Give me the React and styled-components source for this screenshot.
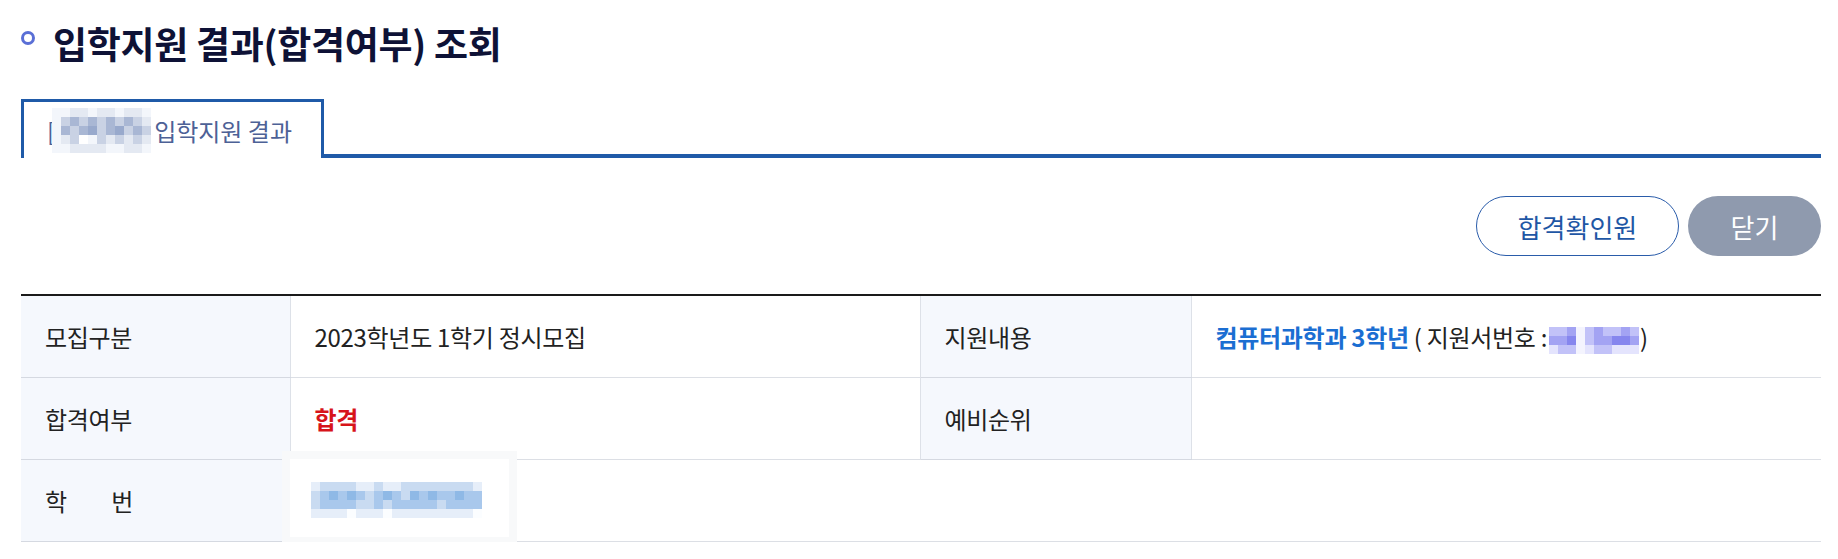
import React from 'react';
import styled, { createGlobalStyle } from 'styled-components';

const GlobalStyle = createGlobalStyle`
  html, body {
    margin: 0;
    padding: 0;
    background: #fff;
  }
  body {
    font-family: "Noto Sans CJK KR", "Noto Sans", sans-serif;
    color: #222;
  }
`;

const Page = styled.div`
  padding: 22px 17px 0 21px;
`;

const Title = styled.h1`
  position: relative;
  margin: 0;
  padding-left: 32px;
  font-size: 37px;
  line-height: 42px;
  font-weight: 700;
  color: #0e1236;
  letter-spacing: -0.3px;

  &::before {
    content: '';
    position: absolute;
    left: 0;
    top: 9px;
    width: 8px;
    height: 8px;
    border: 3px solid #5a6fd6;
    border-radius: 50%;
  }
`;

const TabBar = styled.div`
  display: flex;
  margin-top: 35px;
  border-bottom: 4px solid #1f5aa8;
`;

const Tab = styled.div`
  box-sizing: border-box;
  display: flex;
  align-items: center;
  width: 303px;
  height: 59px;
  margin-bottom: -4px;
  padding: 0 0 0 23px;
  border: 3px solid #1f5aa8;
  border-bottom: none;
  background: #fff;
  font-size: 24px;
  color: #4d6196;
`;

const Bracket = styled.span`
  margin-right: -3px;
`;

const TabLabel = styled.span`
  margin-left: 3px;
`;

const ButtonRow = styled.div`
  display: flex;
  justify-content: flex-end;
  gap: 9px;
  margin-top: 38px;
`;

const Button = styled.button`
  box-sizing: border-box;
  height: 60px;
  width: ${({ $wide }) => ($wide ? '203px' : '133px')};
  border-radius: 30px;
  font-family: inherit;
  font-size: 26px;
  cursor: pointer;
  border: ${({ $outline }) => ($outline ? '1px solid #2a5caa' : 'none')};
  background: ${({ $outline }) => ($outline ? '#fff' : '#8f9aae')};
  color: ${({ $outline }) => ($outline ? '#1f57a5' : '#fff')};
`;

const Table = styled.table`
  width: 100%;
  margin-top: 38px;
  border-collapse: collapse;
  table-layout: fixed;
  border-top: 2px solid #1a1a1a;
`;

const Th = styled.th`
  height: 81px;
  padding: 0 24px;
  background: #f5f8fd;
  text-align: left;
  font-weight: 400;
  font-size: 24px;
  letter-spacing: -0.3px;
  color: #222;
  border-bottom: 1px solid #d5d9e1;
  border-right: 1px solid #dde1e8;
  border-left: ${({ $divider }) => ($divider ? '1px solid #dde1e8' : 'none')};
`;

const Td = styled.td`
  position: relative;
  height: 81px;
  padding: 0 24px;
  font-size: 24px;
  letter-spacing: -0.3px;
  color: #222;
  border-bottom: 1px solid #dcdfe5;
`;

const Spread = styled.span`
  display: inline-flex;
  justify-content: space-between;
  width: 88px;
`;

const Pass = styled.span`
  color: #d7141a;
  font-weight: 700;
`;

const Major = styled.span`
  color: #1b6ed2;
  font-weight: 700;
`;

const Patch = styled.div`
  position: absolute;
  left: -9px;
  top: -9px;
  width: 235px;
  height: 94px;
  box-sizing: border-box;
  display: flex;
  align-items: center;
  padding: 4px 0 0 29px;
  background: #fff;
  box-shadow: inset 0 0 0 8px #f8f9fa;
`;

const MosaicGrid = styled.span`
  display: inline-grid;
  grid-template-columns: repeat(${({ $cols }) => $cols}, ${({ $cell }) => $cell}px);
  grid-auto-rows: ${({ $cell }) => $cell}px;
  vertical-align: middle;
  margin: ${({ $gap }) => $gap || '0'};
`;

const Cell = styled.span`
  background: ${({ $c }) => $c};
`;

function Mosaic({ rows, palette, cell = 9, gap }) {
  const cols = rows[0].length;
  return (
    <MosaicGrid $cols={cols} $cell={cell} $gap={gap}>
      {rows.join('').split('').map((ch, i) => (
        <Cell key={i} $c={palette[ch]} />
      ))}
    </MosaicGrid>
  );
}

const tabPalette = {
  a: '#f3f6fb', b: '#e4e9f2', c: '#c9d2e4', d: '#a9b7d4', e: '#98a9cc', w: '#ffffff',
};
const tabRows = [
  'aabbabbabba',
  'acdcdcdcdcb',
  'adcdecdecdc',
  'abcwacbcbcb',
  'aabbbbaabba',
];

const idPalette = {
  a: '#e6eef9', b: '#c9dbf1', c: '#a9c8ec', d: '#8fb9e6', w: '#fbfdff',
};
const idRows = [
  'abbbbaabaabbbbbbbba',
  'bcdcdcbcdcbdcdccdcc',
  'bccccbbcbcccccbcccc',
  'aaaawaaawaaaaaaaaaw',
];

const appPalette = {
  a: '#e4e4fd', b: '#c2c2f8', c: '#a3a3f3', d: '#8686ee', w: '#f4f4fe',
};
const appRows = [
  'bbcwbcbbcb',
  'ccdwbccddc',
  'abbwabbaaa',
];

export default function App() {
  return (
    <>
      <GlobalStyle />
      <Page>
        <Title>입학지원 결과(합격여부) 조회</Title>

        <TabBar>
          <Tab>
            <Bracket>[</Bracket>
            <Mosaic rows={tabRows} palette={tabPalette} cell={9} />
            <TabLabel>입학지원 결과</TabLabel>
          </Tab>
        </TabBar>

        <ButtonRow>
          <Button $outline $wide>합격확인원</Button>
          <Button>닫기</Button>
        </ButtonRow>

        <Table>
          <colgroup>
            <col style={{ width: '269px' }} />
            <col style={{ width: '630px' }} />
            <col style={{ width: '271px' }} />
            <col />
          </colgroup>
          <tbody>
            <tr>
              <Th>모집구분</Th>
              <Td>2023학년도 1학기 정시모집</Td>
              <Th $divider>지원내용</Th>
              <Td>
                <Major>컴퓨터과학과 3학년</Major> ( 지원서번호 :
                <Mosaic rows={appRows} palette={appPalette} cell={9} gap="0 1px 0 2px" />)
              </Td>
            </tr>
            <tr>
              <Th>합격여부</Th>
              <Td><Pass>합격</Pass></Td>
              <Th $divider>예비순위</Th>
              <Td />
            </tr>
            <tr>
              <Th><Spread><span>학</span><span>번</span></Spread></Th>
              <Td colSpan={3}>
                <Patch>
                  <Mosaic rows={idRows} palette={idPalette} cell={9} />
                </Patch>
              </Td>
            </tr>
          </tbody>
        </Table>
      </Page>
    </>
  );
}
